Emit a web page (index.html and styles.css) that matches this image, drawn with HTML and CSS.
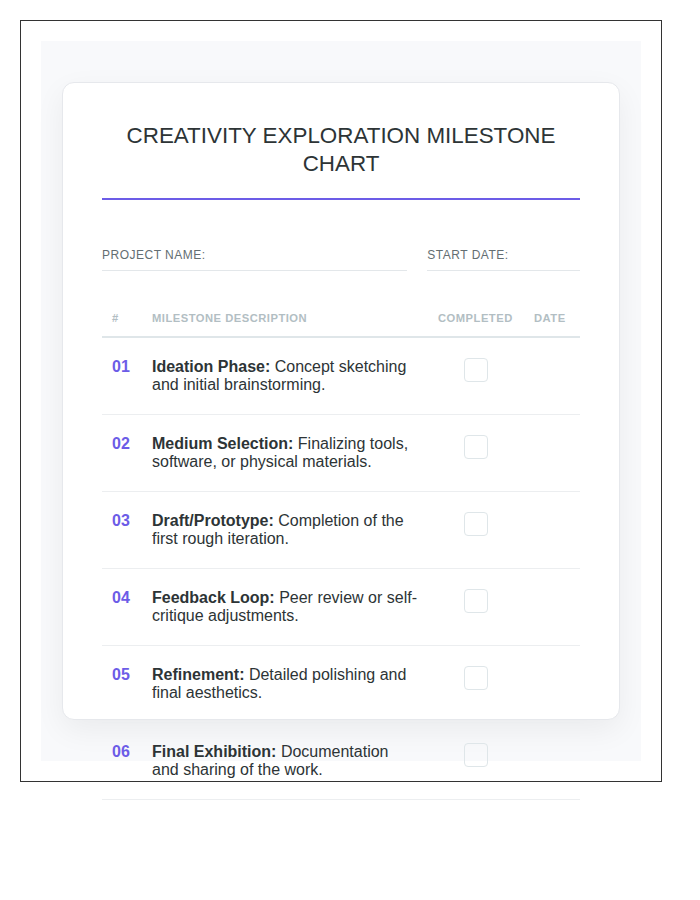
FILE: index.html
```html
<!DOCTYPE html>
<html>
<head>
<meta charset="utf-8">
<link rel="stylesheet" href="styles.css">
</head>
<body>
<div class="frame">
  <div class="stage">
    <div class="card">
      <h1 class="title">CREATIVITY EXPLORATION MILESTONE CHART</h1>
      <div class="meta">
        <div class="field field-wide">PROJECT NAME:</div>
        <div class="field">START DATE:</div>
      </div>
      <table class="chart">
        <colgroup>
          <col class="c-num"><col><col class="c-done"><col class="c-date">
        </colgroup>
        <thead>
          <tr><th>#</th><th>Milestone Description</th><th>Completed</th><th>Date</th></tr>
        </thead>
        <tbody>
          <tr><td class="num">01</td><td><strong>Ideation Phase:</strong> Concept sketching and initial brainstorming.</td><td class="done"><span class="box"></span></td><td></td></tr>
          <tr><td class="num">02</td><td><strong>Medium Selection:</strong> Finalizing tools, software, or physical materials.</td><td class="done"><span class="box"></span></td><td></td></tr>
          <tr><td class="num">03</td><td><strong>Draft/Prototype:</strong> Completion of the first rough iteration.</td><td class="done"><span class="box"></span></td><td></td></tr>
          <tr><td class="num">04</td><td><strong>Feedback Loop:</strong> Peer review or self-critique adjustments.</td><td class="done"><span class="box"></span></td><td></td></tr>
          <tr><td class="num">05</td><td><strong>Refinement:</strong> Detailed polishing and final aesthetics.</td><td class="done"><span class="box"></span></td><td></td></tr>
          <tr><td class="num">06</td><td><strong>Final Exhibition:</strong> Documentation and sharing of the work.</td><td class="done"><span class="box"></span></td><td></td></tr>
        </tbody>
      </table>
    </div>
  </div>
</div>
</body>
</html>
```
FILE: styles.css
```css
html, body {
  margin: 0;
  padding: 0;
  background: #ffffff;
}
body {
  font-family: "Liberation Sans", Arial, sans-serif;
  color: #2d3436;
}
.frame {
  margin: 20px;
  border: 1px solid #333333;
  padding: 20px;
  width: 600px;
  height: 720px;
}
.stage {
  width: 600px;
  height: 720px;
  background: #f8f9fb;
  padding: 41px 21px;
  box-sizing: border-box;
}
.card {
  height: 638px;
  background: #ffffff;
  border: 1px solid #e6e8ec;
  border-radius: 12px;
  box-shadow: 0 10px 30px rgba(0, 0, 0, 0.06);
  padding: 39px;
  box-sizing: border-box;
}
.title {
  margin: 0 0 40px 0;
  padding-bottom: 20px;
  border-bottom: 2px solid #6c5ce7;
  font-size: 22.4px;
  line-height: 28px;
  font-weight: normal;
  text-align: center;
  color: #2d3436;
}
.meta {
  display: flex;
  gap: 20px;
  margin-bottom: 30px;
}
.field {
  flex: 1;
  padding: 8px 0;
  border-bottom: 1px solid #e3e7ea;
  font-size: 12px;
  line-height: 14px;
  letter-spacing: 0.5px;
  color: #636e72;
}
.field-wide {
  flex: 2;
}
.chart {
  width: 100%;
  border-collapse: collapse;
  table-layout: fixed;
}
.c-num { width: 40px; }
.c-done { width: 96px; }
.c-date { width: 56px; }
.chart th {
  text-align: left;
  padding: 11px 10px;
  font-size: 11.2px;
  line-height: 13px;
  font-weight: bold;
  letter-spacing: 0.5px;
  text-transform: uppercase;
  color: #b2bec3;
  border-bottom: 2px solid #dfe6e9;
}
.chart td {
  padding: 20px 10px;
  vertical-align: top;
  font-size: 16px;
  line-height: 18px;
  color: #2d3436;
  border-bottom: 1px solid #eceef0;
}
.chart td.num {
  color: #6c5ce7;
  font-weight: bold;
}
.chart td.done {
  text-align: center;
}
.box {
  display: inline-block;
  width: 24px;
  height: 24px;
  border: 1px solid #dfe6e9;
  border-radius: 4px;
  box-sizing: border-box;
  vertical-align: top;
}
```
